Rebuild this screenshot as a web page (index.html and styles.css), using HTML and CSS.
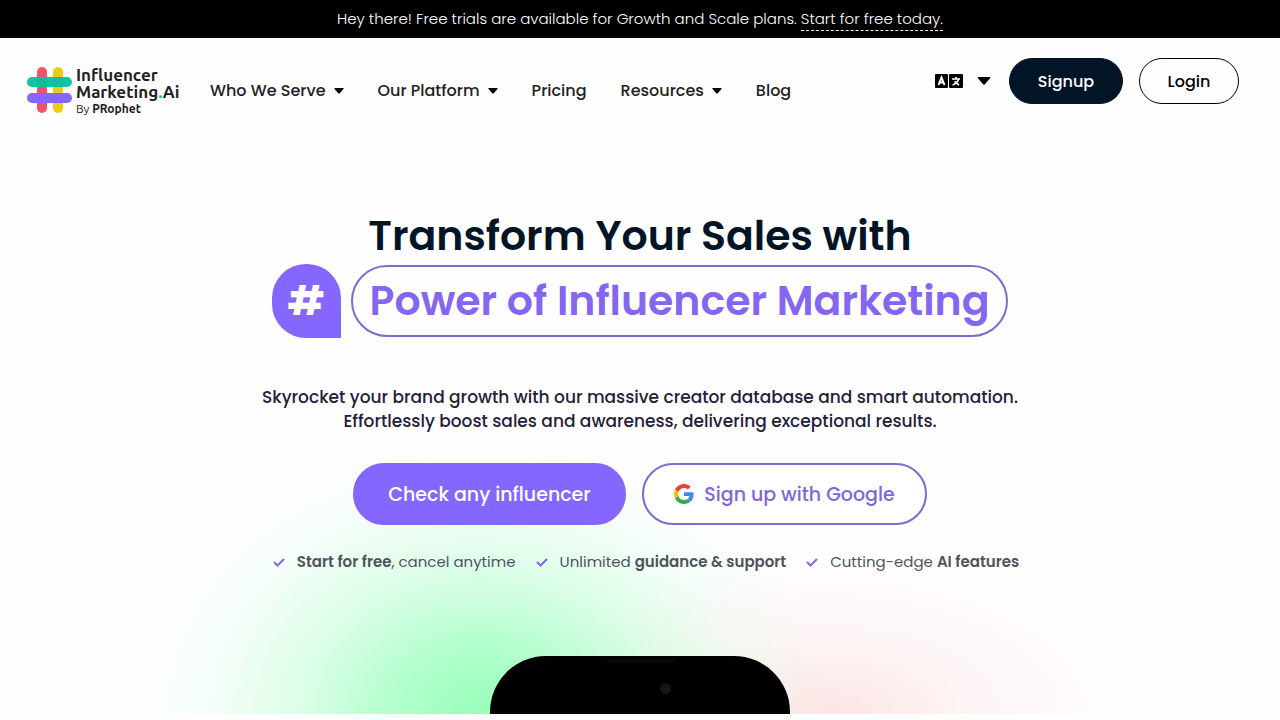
FILE: index.html
```html
<!DOCTYPE html>
<html lang="en">
<head>
    <meta charset="UTF-8">
    <meta name="viewport" content="width=device-width, initial-scale=1.0">
    <title>Influencer Marketing.Ai</title>
    <link rel="stylesheet" href="styles.css">
</head>
<body>
    <div class="topbar">
        <span>Hey there! Free trials are available for Growth and Scale plans.</span>
        <a href="#">Start for free today.</a>
    </div>

    <header class="header">
        <a class="logo" href="#">
            <svg class="logo-mark" viewBox="0 0 46 48" aria-hidden="true">
                <rect x="10" y="1" width="10" height="46" rx="5" fill="#f4516c"/>
                <rect x="26" y="1" width="10" height="46" rx="5" fill="#efcb10"/>
                <rect x="0" y="11" width="45" height="10" rx="5" fill="#12c4a0"/>
                <rect x="0" y="27" width="45" height="10" rx="5" fill="#8566f8"/>
                <path d="M10 11h10v10H10zM26 11h10v10H26z" fill="#10be9a"/>
            </svg>
            <span class="logo-text">
                <span>Influencer</span>
                <span>Marketing<i>.</i>Ai</span>
                <small>By <b>PRophet</b></small>
            </span>
        </a>

        <nav class="nav">
            <a href="#">Who We Serve <svg class="caret" viewBox="0 0 10 6"><path d="M1 0h8q1 0 .5 1L6 5Q5 6 4 5L.5 1Q0 0 1 0z"/></svg></a>
            <a href="#">Our Platform <svg class="caret" viewBox="0 0 10 6"><path d="M1 0h8q1 0 .5 1L6 5Q5 6 4 5L.5 1Q0 0 1 0z"/></svg></a>
            <a href="#">Pricing</a>
            <a href="#">Resources <svg class="caret" viewBox="0 0 10 6"><path d="M1 0h8q1 0 .5 1L6 5Q5 6 4 5L.5 1Q0 0 1 0z"/></svg></a>
            <a href="#">Blog</a>
        </nav>

        <div class="actions">
            <button class="lang" type="button" aria-label="Language">
                <svg class="lang-icon" viewBox="0 0 28 14">
                    <rect width="13" height="14" rx="1"/>
                    <rect x="14" width="14" height="14" rx="1"/>
                    <g fill="none" stroke="#fff">
                        <path d="M3.500 11L6.500 3.500L9.500 11M4.500 8.500h4" stroke-width="2"/>
                        <path d="M17 5h8M21 3v2M23.500 5.500Q22 9.500 17.500 11M19.500 7.500L24 11" stroke-width="1.600"/>
                    </g>
                </svg>
                <svg class="lang-caret" viewBox="0 0 14 8"><path d="M1.500 0h11q1.500 0 .5 1.300L8.200 7Q7 8 5.800 7L1 1.300Q0 0 1.500 0z"/></svg>
            </button>
            <a class="pill pill-dark" href="#">Signup</a>
            <a class="pill" href="#">Login</a>
        </div>
    </header>

    <main class="hero">
        <h1 class="title">
            <span>Transform Your Sales with</span>
            <span class="title-row">
                <span class="hash">#</span>
                <span class="title-box">Power of Influencer Marketing</span>
            </span>
        </h1>

        <p class="lead">Skyrocket your brand growth with our massive creator database and smart automation.<br>Effortlessly boost sales and awareness, delivering exceptional results.</p>

        <div class="cta">
            <a class="btn btn-solid" href="#">Check any influencer</a>
            <a class="btn" href="#">
                <svg class="google" viewBox="0 0 48 48" aria-hidden="true">
                    <path fill="#EA4335" d="M24 9.500c3.540 0 6.710 1.220 9.210 3.600l6.850-6.850C35.900 2.380 30.470 0 24 0 14.620 0 6.510 5.380 2.560 13.220l7.980 6.190C12.430 13.720 17.740 9.500 24 9.500z"/>
                    <path fill="#4285F4" d="M46.980 24.550c0-1.570-.15-3.090-.38-4.550H24v9.020h12.940c-.58 2.960-2.260 5.480-4.780 7.180l7.730 6c4.510-4.180 7.090-10.360 7.090-17.650z"/>
                    <path fill="#FBBC05" d="M10.530 28.590c-.48-1.450-.76-2.990-.76-4.590s.27-3.140.76-4.590l-7.980-6.190C.92 16.460 0 20.120 0 24s.92 7.540 2.560 10.780l7.970-6.190z"/>
                    <path fill="#34A853" d="M24 48c6.480 0 11.930-2.130 15.890-5.810l-7.730-6c-2.150 1.450-4.920 2.300-8.160 2.300-6.260 0-11.570-4.220-13.470-9.910l-7.980 6.190C6.510 42.620 14.620 48 24 48z"/>
                </svg>
                Sign up with Google
            </a>
        </div>

        <ul class="perks">
            <li><svg class="check" viewBox="0 0 12 9"><path d="M1.500 4.500l3 3L10.500 1.500"/></svg><span><b>Start for free</b>, cancel anytime</span></li>
            <li><svg class="check" viewBox="0 0 12 9"><path d="M1.500 4.500l3 3L10.500 1.500"/></svg><span>Unlimited <b>guidance &amp; support</b></span></li>
            <li><svg class="check" viewBox="0 0 12 9"><path d="M1.500 4.500l3 3L10.500 1.500"/></svg><span>Cutting-edge <b>AI features</b></span></li>
        </ul>

        <div class="phone">
            <span class="phone-speaker"></span>
            <span class="phone-camera"></span>
        </div>
    </main>
</body>
</html>
```
FILE: styles.css
```css
* {
    box-sizing: border-box;
}

body {
    margin: 0;
    background: #fefefe;
    color: #1f2124;
    font-family: Poppins, 'Inter', 'Open Sans', sans-serif;
    font-size: 16px;
}

a {
    color: inherit;
    text-decoration: none;
}

.topbar {
    display: flex;
    justify-content: center;
    align-items: baseline;
    gap: 4px;
    padding: 8px 0 7px;
    background: #000;
    color: #fff;
    font-size: 15px;
    font-weight: 300;
    line-height: 22px;
}

.topbar a {
    border-bottom: 1px dashed #fff;
}

.header {
    display: flex;
    align-items: flex-start;
    padding: 20px 41px 0 27px;
}

.logo {
    display: flex;
    width: 183px;
    padding-top: 8px;
}

.logo-mark {
    width: 46px;
    height: 48px;
    margin-right: 3px;
}

.logo-text {
    display: flex;
    flex-direction: column;
    font-family: Ubuntu, 'Noto Sans', sans-serif;
    font-size: 17px;
    font-weight: 700;
    line-height: 17px;
    white-space: nowrap;
}

.logo-text i {
    color: #12c4a0;
    font-style: normal;
}

.logo-text small {
    font-size: 12px;
    font-weight: 400;
}

.nav {
    display: flex;
    gap: 34px;
    padding-top: 21px;
    font-weight: 500;
    line-height: 24px;
    white-space: nowrap;
}

.nav a {
    display: flex;
    align-items: center;
    gap: 8px;
}

.caret {
    width: 10px;
    height: 6px;
}

.actions {
    display: flex;
    align-items: center;
    gap: 16px;
    margin-left: auto;
}

.lang {
    display: flex;
    align-items: center;
    gap: 14px;
    padding: 0 2px 0 0;
    border: 0;
    background: none;
}

.lang-icon {
    width: 28px;
    height: 14px;
}

.lang-caret {
    width: 14px;
    height: 8px;
}

.pill {
    display: flex;
    justify-content: center;
    align-items: center;
    min-width: 100px;
    height: 46px;
    border: 1px solid #000;
    border-radius: 23px;
    color: #000;
    font-weight: 500;
}

.pill-dark {
    min-width: 114px;
    background: #021526;
    border-color: #021526;
    color: #fff;
}

.hero {
    display: flex;
    flex-direction: column;
    align-items: center;
    padding-top: 91px;
    overflow: hidden;
    background:
        radial-gradient(ellipse 350px 280px at 480px 100%, rgba(146, 255, 182, 0.95) 0%, rgba(146, 255, 182, 0.7) 25%, rgba(155, 255, 190, 0.36) 50%, rgba(170, 255, 200, 0.12) 75%, rgba(190, 255, 210, 0) 100%),
        radial-gradient(ellipse 310px 160px at 830px 100%, rgba(252, 222, 222, 0.8) 0%, rgba(253, 228, 228, 0.36) 45%, rgba(253, 232, 232, 0) 100%);
}

.title {
    display: flex;
    flex-direction: column;
    align-items: center;
    margin: 0;
    color: #021526;
    font-size: 41px;
    font-weight: 600;
    line-height: 56px;
    white-space: nowrap;
}

.title-row {
    display: flex;
    align-items: center;
    gap: 10px;
}

.hash {
    width: 69px;
    height: 74px;
    border-radius: 34px 34px 0 34px;
    background: #8566ff;
    color: #fff;
    font-weight: 700;
    line-height: 74px;
    text-align: center;
}

.title-box {
    height: 72px;
    padding: 0 17px;
    border: 2px solid #8069cf;
    border-radius: 36px;
    color: #8566f0;
    line-height: 68px;
}

.lead {
    margin: 47px 0 30px;
    color: #24203a;
    font-size: 17px;
    font-weight: 500;
    line-height: 24px;
    text-align: center;
}

.cta {
    display: flex;
    gap: 16px;
}

.btn {
    display: flex;
    justify-content: center;
    align-items: center;
    gap: 10px;
    min-width: 285px;
    height: 62px;
    border: 2px solid #8069cf;
    border-radius: 31px;
    background: #fff;
    color: #8066d8;
    font-size: 19px;
    font-weight: 500;
}

.btn-solid {
    min-width: 273px;
    border-color: #8566ff;
    background: #8566ff;
    color: #fff;
}

.google {
    width: 20px;
    height: 20px;
}

.perks {
    display: flex;
    gap: 20px;
    margin: 25px 0 0;
    padding: 0 0 0 12px;
    list-style: none;
    color: #50535c;
    font-size: 15px;
    line-height: 24px;
    white-space: nowrap;
}

.perks li {
    display: flex;
    align-items: center;
    gap: 12px;
}

.perks b {
    font-weight: 600;
}

.check {
    width: 12px;
    height: 9px;
    fill: none;
    stroke: #8066f0;
    stroke-width: 2;
    stroke-linecap: round;
}

/* only the top of the device shows above the hero edge */
.phone {
    position: relative;
    width: 300px;
    height: 58px;
    margin-top: 82px;
    border-radius: 56px 56px 0 0;
    background: #000;
}

.phone-speaker {
    position: absolute;
    top: 3px;
    left: 117px;
    width: 68px;
    height: 4px;
    background: #0b0707;
}

.phone-camera {
    position: absolute;
    top: 27px;
    left: 170px;
    width: 11px;
    height: 11px;
    border-radius: 50%;
    background: #14141c;
}
```
